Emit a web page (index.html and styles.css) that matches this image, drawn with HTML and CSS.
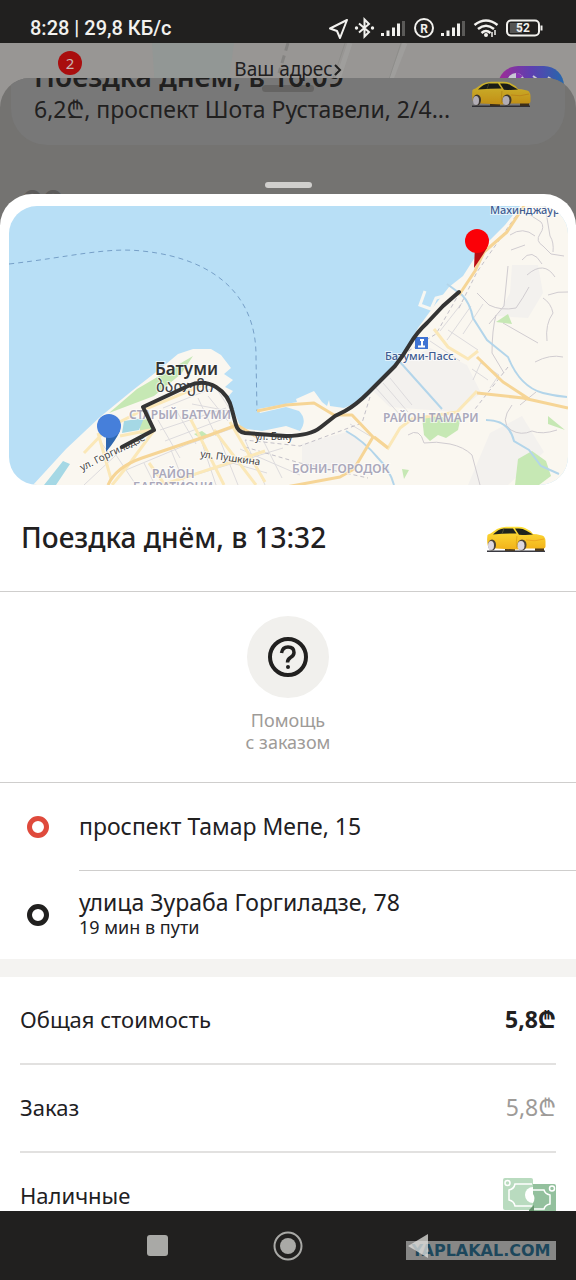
FILE: index.html
```html
<!DOCTYPE html>
<html lang="ru">
<head>
  <meta charset="UTF-8">
  <meta name="viewport" content="width=device-width, initial-scale=1">
  <title>Поездка</title>
  <link rel="stylesheet" href="styles.css">
</head>
<body>

  <!-- shared car drawing -->
  <svg class="sprite" aria-hidden="true">
    <defs>
      <linearGradient id="carPaint" x1="0" y1="0" x2="0" y2="1">
        <stop offset="0" stop-color="#ffe23a"/>
        <stop offset="1" stop-color="#f2b21a"/>
      </linearGradient>
    </defs>
    <symbol id="car" viewBox="0 0 60 28">
      <path d="M1 24.500h58v1.500H1z" fill="#3a3a42"/>
      <path d="M19 21h10v4H19zM49 21h9v4h-9z" fill="#4b3a20"/>
      <path d="M1.500 9q.5-1 3-1.500L11 3Q15 1 20 .8h12q4 0 7 1.200 5 2 8 6 8 .5 11 2.500 1.500 2 1.500 5v5q0 2-2 2H40l-9 1-21-1-8-2Q.500 15 1.500 9z" fill="url(#carPaint)"/>
      <path d="M7 8.500Q12 3 18 2.400h9l3.500 5q-11 0-23.500 1.100z" fill="#20231d"/>
      <path d="M29 2.400h4q4 0 7 2l7 4q-5 .8-14 .3z" fill="#20231d"/>
      <path d="M18 2.400l-2 5.500" stroke="#5d5a35" stroke-width=".8"/>
      <path d="M31 10q-1 5-.5 12" stroke="#d29a12" stroke-width=".6" fill="none"/>
      <path d="M40 14q9 2 18-1" stroke="#eda820" stroke-width="1" fill="none"/>
      <ellipse cx="6" cy="19" rx="4" ry="5.500" fill="#4a4238"/>
      <ellipse cx="5" cy="19.500" rx="3" ry="4.500" fill="#ddd8e2"/>
      <ellipse cx="36" cy="19" rx="4.500" ry="5.500" fill="#4a4238"/>
      <ellipse cx="35" cy="19.500" rx="3.500" ry="4.500" fill="#ddd8e2"/>
    </symbol>
  </svg>

  <div class="screen">
    <header class="status-bar">
      <span class="status-text">8:28 | 29,8 КБ/с</span>
      <svg class="status-icons" viewBox="0 0 216 24" fill="none" stroke="#f2f1ee" stroke-width="2" aria-hidden="true">
        <path d="M19 4L2 12.500l7 2.500 3 7z" stroke-linejoin="round"/>
        <path d="M31 7.500l10 8.500-4.500 4.500v-17L41 8l-10 8.500"/>
        <g fill="#f2f1ee" stroke="none">
          <circle cx="28.500" cy="12" r="1.700"/>
          <circle cx="44.500" cy="12" r="1.700"/>
          <path d="M53 17h3v3h-3zM58.500 14.500h3V20h-3zM64 11.500h3V20h-3zM69 7.500h3V20h-3z"/>
          <path d="M113 17h3v3h-3zM118.500 14.500h3V20h-3zM124 11.500h3V20h-3zM129 7.500h3V20h-3z"/>
          <path d="M74 5h3v15h-3zM134 5h3v15h-3z" fill="#5b5a58"/>
        </g>
        <circle cx="96" cy="12" r="9"/>
        <text x="96" y="16.500" text-anchor="middle" class="reg">R</text>
        <path d="M146.500 9q11.500-9 23 0M150 13q8-6.500 16 0M153.500 17q4.500-4 9 0" stroke-width="2.500"/>
        <circle cx="158" cy="19" r="2" fill="#f2f1ee" stroke="none"/>
        <path d="M164 16v5M167 14v5" stroke-width="1.500"/>
        <rect x="179" y="4.500" width="32" height="15" rx="4"/>
        <path d="M182 7h12v10h-12z" fill="#555452" stroke="none"/>
        <path d="M213.500 9.500v5"/>
        <text x="195" y="16" text-anchor="middle" class="bat">52</text>
      </svg>
    </header>

    <main class="content">
      <!-- dimmed screen under the sheet -->
      <section class="under">
        <div class="under-top">
          <svg class="under-map" viewBox="0 0 576 60" preserveAspectRatio="none" aria-hidden="true">
            <path d="M152 0h82l-8 60h-70z" fill="#929795"/>
            <path d="M350 0l-12 36M405 0l-14 36" stroke="#9f9e9c" stroke-width="5"/>
            <path d="M345 0l-12 36M401 0l-12 36" stroke="#8e8d8b" stroke-width="1"/>
            <path d="M288 0l-9 30" stroke="#848381" stroke-width="3" stroke-dasharray="8 5"/>
          </svg>
          <span class="badge">2</span>
          <a class="address" href="#">Ваш адрес<svg viewBox="0 0 8 12" aria-hidden="true"><path d="M1 1l5 5-5 5" fill="none" stroke="#21201f" stroke-width="2"/></svg></a>
          <div class="plus">
            <svg viewBox="0 0 66 24" aria-hidden="true">
              <circle cx="18" cy="16" r="9" fill="#c9c8d4"/>
              <path d="M18 6v10l7-6z" fill="#8a38b4"/>
              <path d="M35 10l4 3M50 11l3 2" stroke="#c9c8d4" stroke-width="2"/>
            </svg>
          </div>
        </div>
        <div class="under-sheet">
          <div class="under-handle"></div>
          <div class="under-card">
            <div>
              <h2>Поездка днём, в 16:09</h2>
              <p>6,2₾, проспект Шота Руставели, 2/4...</p>
            </div>
            <svg class="car dim"><use href="#car"/></svg>
          </div>
          <p class="under-more">оо</p>
        </div>
      </section>

      <section class="sheet">
        <div class="handle"></div>
        <svg class="map" viewBox="9 206 559 279" role="img" aria-label="Маршрут поездки">
          <rect x="9" y="206" width="559" height="279" fill="#b8dff6"/>
          <path d="M9 264C70 257 106 247 142 251C220 259 257 300 256 358L257 411" fill="none" stroke="#769fc7" stroke-dasharray="5 4"/>

          <!-- land -->
          <path d="M33 485L66 449 100 417 133 390 160 369 178 354 193 349 211 349 221 355 231 368 224 374 233 380 225 387 233 391 227 398 236 416 241 428 262 431 286 426 300 431Q308 420 299 411L286 407 260 413 258 409 297 402 296 399 314 391 322 402 327 406 329 400 330 406 344 408 365 399 393 370 408 346 418 328 434 306 449 287 463 276 477 254 491 239 505 225 520 206H568V485z" fill="#faf7f0"/>
          <path d="M425 291l-5 14 11 4 5-11 8-2" fill="none" stroke="#f7f7f2" stroke-width="3"/>
          <g fill="#f3f1ee">
            <path d="M401 363l29-15 37 17 14 28-25 19-66-5-18-17z"/>
            <path d="M512 265l26 0 5 28-15 25-31-2 13-23z"/>
            <path d="M302 444l45-12 22 14-17 26-50-8z"/>
            <path d="M490 433l32-17 22 36-36 33h-40z"/>
          </g>
          <g fill="#c6e8b4">
            <path d="M109 413l28-24 56-33-12 18-27 22z"/>
            <path d="M422 417l15-3 12 7 12-5-3 14-12 8-8-3-8 6-6-6z"/>
            <path d="M518 459l14-8 14 10 5 15-12 9h-24z"/>
            <path d="M496 322l12-8 4 10zM548 416l17 14-17-6zM402 469l7 1-5 9zM194 434l8-3 7 5-6 4z"/>
            <path d="M140 418l10 2 2 12-12 2z"/>
          </g>
          <path d="M124 421l20-3-5 12-17 3zM48 480l15-19 7 3-14 21H44z" fill="#a5d8e5"/>

          <!-- minor streets -->
          <g fill="none" stroke="#dddbdd" stroke-width="1">
            <path d="M84 485l32-30 20 30M110 455l-12-17M126 470l60-25 50-18M144 463l11 22M171 450l14 35M201 440l15 45M216 430l22 55M158 420l22 38M176 410l20 34M198 398l18 38M163 408l50-20M160 430l66-22M165 441l66-25M208 396l20 25M218 391l13 20M192 404l42 8M245 440l20 45M262 438l20 40M185 478l98-30M240 449l60 26M225 461l42 12"/>
            <path d="M376 388l25 28M383 383l25 29M390 378l22 27M350 424l20 12M430 341l30 20M448 330l30 20M462 303l-22 28M471 306l-24 34M483 304l-20 30M472 369l16 11M482 360l-9 20M481 363l18 12-9 13"/>
          </g>
          <g fill="none" stroke="#d0ccd0" stroke-width="1">
            <path d="M527 213l14 9q4 5-1 12t3 12l8 8 13 2M545 206l5 30q4 6 3 16M510 235q13-9 25 1M477 293l12 12q12 6 27 3 7-10 13-21M543 298q8 5 10 15-8 11-6 28M568 292q-10-1-20 3M496 315q-4 15-4 38l12 20M508 266l-4 40-15 18M538 343l-35-20M535 362q15-8 28-5M512 405q-13 17-1 25 10 6 21 1 10 4 25-1M408 435q12-8 16 8 12-2 26 1t22 11l8 30M520 405l16-13"/>
            <path d="M522 260q10-13 20 4M527 275q17-15 28 2M511 250l14-5"/>
          </g>
          <path d="M460 292l-24 42-39 24M370 397l-8 26-62 23-55-6M245 447l55 16 68 15M520 210l-43 62-19 38M508 367l-33 42" fill="none" stroke="#c3c0c8" stroke-width="1" stroke-dasharray="4 3"/>
          <path d="M447 284l15 11q8 8 11 23l14 22 21 17q12 30 35 36 12 3 24 4M400 362l42 47M346 431q18 10 32 27 12 12 16 27M486 420q23 0 28 21l15 9 12 16 18 8" fill="none" stroke="#b3d5ea" stroke-width="2"/>

          <!-- main roads -->
          <g fill="none" stroke="#fbe8b8" stroke-width="3">
            <path d="M84 453l24-25 35-18 60-25M98 433l13 46M155 429l-25 34-18 22M190 418l14 27 20 40M149 463l16 22M214 430l42 55M230 422l35 60M165 484l100-33M120 436l30-6"/>
            <path d="M434 329l14 18 20 12 10-8M374 437l14 11 12-20 12-9 45-7 20-21"/>
          </g>
          <path d="M108 485q8-18 34-27l65-22 30-11 20 12M257 411l29-6 28-2 20 12 18 0 21 22-19 32-14 8-54 10M374 437l14 11M477 393l46 5 45 10M477 357l26 25 26 17M524 206l-17 26-23 20-9 19-16 24" fill="none" stroke="#f6d596" stroke-width="3" stroke-linejoin="round"/>

          <g class="district">
            <text x="129" y="419">СТАРЫЙ БАТУМИ</text>
            <text x="152" y="478">РАЙОН</text>
            <text x="133" y="491">БАГРАТИОНИ</text>
            <text x="292" y="473">БОНИ-ГОРОДОК</text>
            <text x="383" y="422">РАЙОН ТАМАРИ</text>
          </g>
          <text class="city" x="155" y="375">Батуми</text>
          <text class="city-ge" x="156" y="392">ბათუმი</text>
          <g class="street">
            <text transform="translate(82 471) rotate(-26)">ул. Горгиладзе</text>
            <text transform="translate(200 457) rotate(8)">ул. Пушкина</text>
            <text x="255" y="440">ул. Баку</text>
          </g>
          <g class="place">
            <text x="385" y="360">Батуми-Пасс.</text>
            <text x="490" y="214">Махинджаури</text>
          </g>
          <path d="M415 337h13v12h-13z" fill="#3f73d3"/>
          <path d="M418 346.500h7M420 340h4M422 340v6" stroke="#fff" stroke-width="2"/>

          <!-- route -->
          <path d="M122 447L154 430 143 407 188 386Q203 379 216 387T232 410L236 425Q238 432 245 433L286 436Q310 436 321 427L335 416 345 411Q356 405 368 393L395 366Q403 356 410 344T427 323L443 306 459 292" fill="none" stroke="#343434" stroke-width="4" stroke-linecap="round" stroke-linejoin="round"/>

          <path d="M106 433h5l9-2q-4 9-14 21z" fill="#2f67af"/>
          <circle cx="109" cy="426" r="12" fill="#467fda"/>
          <path d="M475 246l12 2q-6 10-13 20z" fill="#ba0b12"/>
          <circle cx="477" cy="241" r="12" fill="#fb0007"/>
        </svg>

        <div class="trip">
          <h1>Поездка днём, в 13:32</h1>
          <svg class="car"><use href="#car"/></svg>
        </div>

        <div class="help">
          <button class="help-button" type="button">
            <span class="help-circle">
              <svg viewBox="0 0 40 40" fill="none" stroke="#21201f" aria-hidden="true">
                <circle cx="20" cy="20" r="18" stroke-width="4"/>
                <path d="M13.500 16q1-6 6.500-6 6 0 6 5.500 0 3-3.500 5-3 2-3 5" stroke-width="3.500"/>
                <circle cx="20" cy="30" r="2" fill="#21201f" stroke="none"/>
              </svg>
            </span>
            <span>Помощь<br>с заказом</span>
          </button>
        </div>

        <ul class="route">
          <li>
            <span class="ring red"></span>
            <div class="point">проспект Тамар Мепе, 15</div>
          </li>
          <li>
            <span class="ring"></span>
            <div class="point">улица Зураба Горгиладзе, 78<small>19 мин в пути</small></div>
          </li>
        </ul>

        <ul class="costs">
          <li><span>Общая стоимость</span><b>5,8₾</b></li>
          <li><span>Заказ</span><span class="muted">5,8₾</span></li>
          <li>
            <span>Наличные</span>
            <svg class="cash" viewBox="0 0 53 36" fill="none" aria-hidden="true">
              <rect width="30" height="32" rx="2" fill="#b9dbbf"/>
              <path d="M29 6H12q-1 5-6 6v10q5 1 6 6h17" stroke="#fff" stroke-width="1.500"/>
              <circle cx="4.500" cy="5" r="2.500" stroke="#fff" stroke-width="1.500"/>
              <path d="M30 9a8 8 0 0 0 0 16z" fill="#fff"/>
              <path d="M30 6h21q2 0 2 2v28H26v-4h4z" fill="#93c09d"/>
              <path d="M30 12h11q1 4 6 5v9q-5 1-6 5H31" stroke="#fff" stroke-width="1.500"/>
              <circle cx="49" cy="10.500" r="2.500" stroke="#fff" stroke-width="1.500"/>
              <path d="M30 16q3 4 0 9z" fill="#fff"/>
              <path d="M26 32l5-5v9h-5z" fill="#68966f"/>
            </svg>
          </li>
        </ul>
      </section>
    </main>

    <nav class="nav-bar">
      <button type="button" aria-label="Недавние"><svg viewBox="0 0 30 30"><rect x="4" y="4" width="21" height="21" rx="3"/></svg></button>
      <button type="button" aria-label="Домой"><svg viewBox="0 0 30 30"><circle cx="15" cy="15" r="13.500" fill="none" stroke="#a9a9a6" stroke-width="2"/><circle cx="15" cy="15" r="8"/></svg></button>
      <span class="watermark">YAPLAKAL.COM</span>
      <button class="back" type="button" aria-label="Назад"><svg viewBox="0 0 30 30"><path d="M5 15L25 3v24z"/></svg></button>
    </nav>
  </div>

</body>
</html>
```
FILE: styles.css
```css
* {
  box-sizing: border-box;
}

body {
  margin: 0;
  font-family: "Noto Sans", "Open Sans", "DejaVu Sans", sans-serif;
  background: #21201f;
  color: #21201f;
}

h1, h2, p, ul {
  margin: 0;
  padding: 0;
}

ul {
  list-style: none;
}

button {
  border: none;
  background: none;
  padding: 0;
  font: inherit;
  cursor: pointer;
}

.sprite {
  position: absolute;
  width: 0;
  height: 0;
}

.screen {
  display: flex;
  flex-direction: column;
  height: 100vh;
  overflow: hidden;
}

/* status bar */
.status-bar {
  display: flex;
  justify-content: space-between;
  align-items: center;
  flex: none;
  padding: 14px 32px 1px 30px;
  background: #21201f;
}

.status-text {
  font-family: Roboto, sans-serif;
  font-weight: 500;
  font-size: 20px;
  line-height: 28px;
  color: #f2f1ee;
}

.status-icons {
  width: 216px;
  height: 24px;
}

.status-icons text {
  font-family: Roboto, sans-serif;
  font-weight: 700;
  font-size: 12px;
  fill: #f2f1ee;
  stroke: none;
}

.content {
  flex: 1;
  min-height: 0;
  overflow: hidden;
  background: #fff;
}

/* dimmed part */
.under {
  height: 182px;
  background: #989694;
}

.under-top {
  position: relative;
  display: flex;
  justify-content: center;
  height: 35px;
  padding-top: 15px;
}

.under-map {
  position: absolute;
  inset: 0;
  width: 100%;
  height: 60px;
}

.badge {
  position: absolute;
  z-index: 2;
  left: 58px;
  top: 8px;
  width: 24px;
  height: 24px;
  border-radius: 50%;
  background: #a90e0e;
  color: #c9b5b3;
  font-size: 15px;
  line-height: 24px;
  text-align: center;
}

.address {
  position: relative;
  z-index: 2;
  height: 22px;
  font-size: 19px;
  line-height: 22px;
  color: #21201f;
  text-decoration: none;
}

.address svg {
  width: 8px;
  height: 12px;
  margin-left: 1px;
}

.plus {
  position: absolute;
  right: 12px;
  top: 23px;
  width: 66px;
  height: 40px;
  border-radius: 20px;
  background: linear-gradient(90deg, #a02a96, #5d3fb0 50%, #2668ac);
}

.under-sheet {
  position: relative;
  height: 147px;
  border-radius: 30px 30px 0 0;
  overflow: hidden;
  background: #747371;
}

.under-handle {
  position: absolute;
  left: calc(50% - 26px);
  top: 7px;
  width: 52px;
  height: 7px;
  border-radius: 4px;
  background: #656463;
}

.under-card {
  display: flex;
  justify-content: space-between;
  height: 67px;
  margin: 0 11px;
  padding: 0 34px 0 23px;
  border-radius: 0 0 36px 36px;
  background: #787878;
}

.under-card h2 {
  position: relative;
  margin-top: -19px;
  font-size: 28px;
  font-weight: 600;
  line-height: 34px;
}

.under-card p {
  font-size: 23px;
  line-height: 32px;
}

.under-more {
  padding-left: 22px;
  margin-top: 27px;
  font-size: 34px;
  line-height: 48px;
  font-weight: 600;
  color: #5c5b5a;
}

.car {
  flex: none;
  width: 60px;
  height: 28px;
}

.under-card .car {
  margin-top: 3px;
  filter: brightness(0.8);
}

/* bottom sheet */
.sheet {
  position: relative;
  margin-top: -31px;
  padding-top: 12px;
  border-radius: 32px 32px 0 0;
  background: #fff;
}

.handle {
  position: absolute;
  left: calc(50% - 23px);
  top: -12px;
  width: 47px;
  height: 6px;
  border-radius: 3px;
  background: #d0cfcd;
}

.map {
  display: block;
  width: calc(100% - 17px);
  margin: 0 8px 0 9px;
  border-radius: 28px;
}

.map text {
  font-size: 12px;
  paint-order: stroke;
  stroke: #fff;
  stroke-width: 2px;
  stroke-opacity: 0.6;
}

.map .district text {
  font-weight: 600;
  fill: #aaa8bb;
}

.map .city {
  font-size: 17px;
  font-weight: 600;
  fill: #333;
}

.map .city-ge {
  font-family: "DejaVu Sans", sans-serif;
  font-size: 17px;
  fill: #444;
}

.map .street text {
  font-size: 10px;
  fill: #444;
}

.map .place text {
  font-size: 11px;
  font-weight: 500;
  fill: #3f5c91;
}

.trip {
  display: flex;
  justify-content: space-between;
  align-items: center;
  height: 107px;
  padding: 0 30px 0 21px;
  border-bottom: 1px solid #cfcecd;
}

.trip h1 {
  padding-bottom: 2px;
  font-size: 28px;
  font-weight: 500;
  line-height: 34px;
}

.trip .car {
  margin-top: 4px;
}

.help {
  display: flex;
  justify-content: center;
  padding: 24px 0 29px;
  border-bottom: 1px solid #cfcecd;
}

.help-button {
  display: flex;
  flex-direction: column;
  align-items: center;
  gap: 11px;
  color: #9e9b98;
  font-size: 18px;
  line-height: 22px;
}

.help-circle {
  display: grid;
  place-items: center;
  width: 82px;
  height: 82px;
  border-radius: 50%;
  background: #f1f0ed;
}

.help-circle svg {
  width: 40px;
  height: 40px;
}

.route li {
  display: flex;
  align-items: center;
  padding-left: 27px;
}

.ring {
  flex: none;
  width: 22px;
  height: 22px;
  margin-right: 30px;
  border: 5px solid #21201f;
  border-radius: 50%;
}

.ring.red {
  border-color: #df4a3c;
}

.point {
  display: flex;
  flex-direction: column;
  justify-content: center;
  flex: 1;
  height: 88px;
  padding-bottom: 2px;
  font-size: 23px;
  line-height: 26px;
}

.route li:first-child .point {
  border-bottom: 1px solid #cfcecd;
}

.point small {
  font-size: 18px;
  line-height: 24px;
}

.costs {
  padding: 0 20px;
  border-top: 18px solid #f4f3f1;
}

.costs li {
  display: flex;
  justify-content: space-between;
  align-items: center;
  height: 88px;
  border-bottom: 2px solid #e2e1e0;
  font-size: 22px;
  line-height: 28px;
}

.costs span, .costs b {
  padding-bottom: 2px;
}

.costs b, .costs .muted {
  font-size: 23px;
}

.costs .muted {
  color: #9e9b98;
}

.cash {
  width: 53px;
  height: 36px;
}

/* system navigation */
.nav-bar {
  position: relative;
  display: grid;
  grid-template-columns: repeat(3, 130px);
  justify-content: center;
  flex: none;
  height: 69px;
  background: #21201f;
}

.nav-bar button {
  display: grid;
  place-items: center;
}

.nav-bar svg {
  width: 30px;
  height: 30px;
  fill: #a9a9a6;
}

.nav-bar .back {
  position: relative;
}

.nav-bar .back svg {
  fill: rgba(225, 225, 223, 0.75);
}

.watermark {
  position: absolute;
  right: 20px;
  bottom: 20px;
  width: 150px;
  background: rgba(190, 190, 190, 0.65);
  color: #1d475c;
  font-family: "DejaVu Sans", sans-serif;
  font-weight: 700;
  font-size: 16px;
  line-height: 19px;
  text-align: center;
}
```
